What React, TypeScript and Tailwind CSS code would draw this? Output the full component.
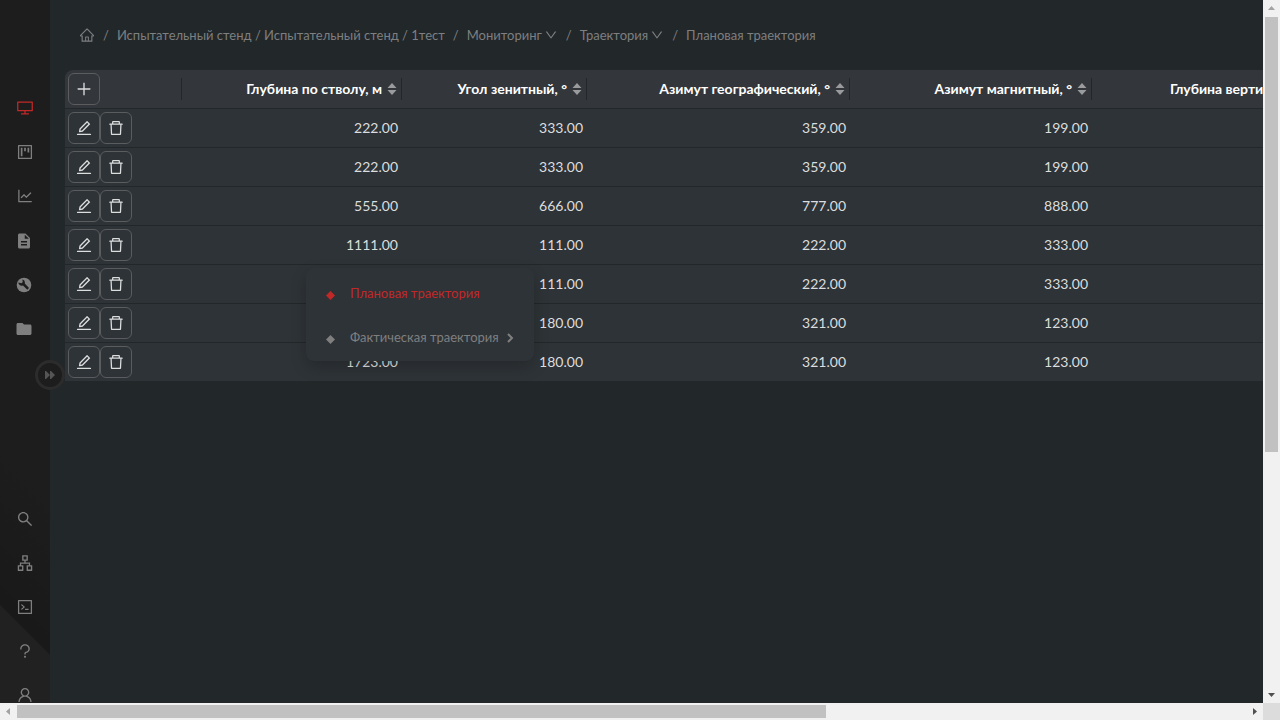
import type { ReactNode } from "react";
import {
  AiOutlineApartment, AiOutlineCode, AiOutlineDelete, AiOutlineDesktop, AiOutlineDown, AiOutlineEdit,
  AiOutlineHome, AiOutlineLineChart, AiOutlinePlus, AiOutlineProject, AiOutlineQuestion, AiOutlineSearch, AiOutlineUser,
} from "react-icons/ai";
import { MdDescription, MdFolder } from "react-icons/md";

const ServiceIcon = () => (
  <svg viewBox="0 0 16 16" fill="currentColor" className="mt-0.5 mr-0.5 size-4" aria-hidden="true">
    <circle cx="8" cy="8" r="7.300" />
    <path d="M2.300 5.600L5.500 6.200 6.800 4.900 6.300 2.500C8.300 2.700 9.300 4.600 8.800 6.600L13 11 11.300 12.800 7 8.500C4.800 9.200 2.500 8 2.300 5.600z" fill="#1d1d1d" />
  </svg>
);

const topItems: [string, ReactNode][] = [
  ["Мониторинг", <AiOutlineDesktop className="size-[18px]" />],
  ["Проекты", <AiOutlineProject className="size-[18px]" />],
  ["Графики", <AiOutlineLineChart className="size-[18px]" />],
  ["Отчёты", <MdDescription className="mt-0.5 mr-0.5 size-[18px]" />],
  ["Обслуживание", <ServiceIcon />],
  ["Файлы", <MdFolder className="mt-0.5 mr-0.5 size-[18px]" />],
];
const bottomItems: [string, ReactNode][] = [
  ["Поиск", <AiOutlineSearch className="size-[18px]" />],
  ["Структура", <AiOutlineApartment className="size-[18px]" />],
  ["Консоль", <AiOutlineCode className="size-[18px]" />],
  ["Справка", <AiOutlineQuestion className="size-[18px]" />],
  ["Профиль", <AiOutlineUser className="size-[18px]" />],
];

const columns = ["Глубина по стволу, м", "Угол зенитный, °", "Азимут географический, °", "Азимут магнитный, °", "Глубина вертикальная, м"];
const rows = [
  ["222.00", "333.00", "359.00", "199.00"],
  ["222.00", "333.00", "359.00", "199.00"],
  ["555.00", "666.00", "777.00", "888.00"],
  ["1111.00", "111.00", "222.00", "333.00"],
  ["1111.00", "111.00", "222.00", "333.00"],
  ["1723.00", "180.00", "321.00", "123.00"],
  ["1723.00", "180.00", "321.00", "123.00"],
];

function NavLinks({ items, active }: { items: [string, ReactNode][]; active?: number }) {
  return (
    <ul>
      {items.map(([label, icon], i) => (
        <li key={label}>
          <a href="#" aria-label={label} className={`flex h-11 items-center justify-center ${i === active ? "text-[#c32828]" : "text-[#7f7f7f]"}`}>
            {icon}
          </a>
        </li>
      ))}
    </ul>
  );
}

function Sidebar() {
  return (
    <nav className="relative z-10 w-[50px] shrink-0 bg-[#1d1d1d]">
      <div className="flex h-full flex-col justify-between overflow-hidden bg-[linear-gradient(45deg,#212121_0,#212121_69px,#191919_70px,#1d1d1d_180px)] pt-[86px]">
        <NavLinks items={topItems} active={0} />
        <div className="-mb-[14px]">
          <NavLinks items={bottomItems} />
        </div>
      </div>
      <button aria-label="Развернуть меню" className="absolute top-[360px] -right-[15px] flex size-[30px] items-center justify-center rounded-full border-[3px] border-[#2c2c2c] bg-[#1d1d1d] text-[#555555]">
        <svg width="10" height="8" viewBox="0 0 10 8" fill="currentColor"><path d="M0 0h1l4 4-4 4H0zM5 0h1l4 4-4 4H5z" /></svg>
      </button>
    </nav>
  );
}

function Breadcrumbs() {
  return (
    <nav className="flex items-center gap-2 px-[14px] text-[13px] leading-5 whitespace-nowrap text-[#7d7f80]">
      <a href="#" aria-label="Главная"><AiOutlineHome className="size-4" /></a>
      <span>/</span>
      <a href="#">Испытательный стенд / Испытательный стенд / 1тест</a>
      <span>/</span>
      <a href="#" className="flex items-center gap-0.5">Мониторинг <AiOutlineDown className="size-[14px]" /></a>
      <span>/</span>
      <a href="#" className="flex items-center gap-0.5">Траектория <AiOutlineDown className="size-[14px]" /></a>
      <span>/</span>
      <span>Плановая траектория</span>
    </nav>
  );
}

function IconButton({ label, children }: { label: string; children: ReactNode }) {
  return (
    <button aria-label={label} className="flex size-8 items-center justify-center rounded-md border border-[#5a5c5e] text-lg text-[#dcdddd]">
      {children}
    </button>
  );
}

function TrajectoryTable() {
  return (
    <table className="w-[1815px] table-fixed border-separate border-spacing-0 text-sm text-[#dcdddd]">
      <colgroup>
        <col className="w-[117px]" />
        <col className="w-[220px]" />
        <col className="w-[185px]" />
        <col className="w-[263px]" />
        <col className="w-[242px]" />
        <col />
      </colgroup>
      <thead>
        <tr className="h-[39px] bg-[#33363b] text-white">
          <th className="rounded-tl-lg border-b border-[#22272a] p-0 pl-[3px]">
            <div className="flex items-center justify-between">
              <IconButton label="Добавить"><AiOutlinePlus /></IconButton>
              <span className="h-[22px] w-px bg-[#22272a]" />
            </div>
          </th>
          {columns.map((c, i) => (
            <th key={c} className="border-b border-[#22272a] p-0 font-bold">
              <div className={`flex items-center whitespace-nowrap ${i === 4 ? "pl-[78px]" : "justify-end"}`}>
                {c}
                <svg className="mr-1 ml-[5px]" width="10" height="14" viewBox="0 0 10 14" fill="#999b9d"><path d="M5 1l4.500 5H.5zM5 13l4.500-5H.5z" /></svg>
                <span className="h-[22px] w-px bg-[#22272a]" />
              </div>
            </th>
          ))}
        </tr>
      </thead>
      <tbody>
        {rows.map((r, i) => (
          <tr key={i} className="h-[39px] bg-[#2e3337]">
            <td className="border-b border-[#22272a] p-0 pl-[3px]">
              <div className="flex">
                <IconButton label="Редактировать"><AiOutlineEdit /></IconButton>
                <IconButton label="Удалить"><AiOutlineDelete /></IconButton>
              </div>
            </td>
            {r.map((v, j) => (
              <td key={j} className="border-b border-[#22272a] py-0 pr-1 pl-0 text-right">{v}</td>
            ))}
            <td className="border-b border-[#22272a] p-0" />
          </tr>
        ))}
      </tbody>
    </table>
  );
}

const Diamond = () => (
  <svg width="9" height="9" viewBox="0 0 9 9" fill="currentColor" className="mt-0.5 shrink-0"><path d="M4.500 0L9 4.500 4.500 9 0 4.500z" /></svg>
);

function TrajectoryMenu() {
  return (
    <ul className="absolute top-[268px] left-[306px] z-20 w-[228px] rounded-lg bg-[#2e3337] pt-1 pb-px text-[13px] text-[#7f7f7f] shadow-[0_6px_16px_rgba(0,0,0,0.2)]">
      <li>
        <a href="#" className="flex h-11 items-center gap-[15px] px-5 text-[#c32828]">
          <Diamond />
          <span>Плановая траектория</span>
        </a>
      </li>
      <li>
        <a href="#" className="flex h-11 items-center gap-[15px] px-5">
          <Diamond />
          <span className="grow whitespace-nowrap">Фактическая траектория</span>
          <svg width="7" height="10" viewBox="0 0 7 10" fill="none" stroke="currentColor" strokeWidth="2" className="-ml-3 shrink-0"><path d="M1 1l4 4-4 4" /></svg>
        </a>
      </li>
    </ul>
  );
}

const Arrow = ({ d, fill }: { d: string; fill: string }) => (
  <svg width="17" height="17" viewBox="0 0 17 17" fill={fill} className="shrink-0"><path d={d} /></svg>
);

export default function App() {
  return (
    <div className="grid h-screen grid-cols-[minmax(0,1fr)_17px] grid-rows-[minmax(0,1fr)_17px] bg-[#f1f1f1] font-['Lato','Noto_Sans',sans-serif]">
      <div className="relative flex overflow-hidden bg-[#22272a]">
        <Sidebar />
        <main className="flex min-w-0 grow flex-col gap-[25px] overflow-hidden pt-[25px] pl-[15px]">
          <Breadcrumbs />
          <TrajectoryTable />
        </main>
        <TrajectoryMenu />
      </div>
      <div className="flex flex-col items-center">
        <Arrow d="M5 10h7L8.500 6z" fill="#a3a3a3" />
        <div className="min-h-0 grow self-stretch px-0.5"><div className="h-[65%] bg-[#c1c1c1]" /></div>
        <Arrow d="M5 7h7l-3.500 4z" fill="#505050" />
      </div>
      <div className="flex items-center">
        <Arrow d="M10 5v7L6 8.500z" fill="#a3a3a3" />
        <div className="min-w-0 grow self-stretch py-0.5"><div className="h-full w-[65.8%] bg-[#c1c1c1]" /></div>
        <Arrow d="M7 5v7l4-3.500z" fill="#505050" />
      </div>
      <div className="bg-[#dcdcdc]" />
    </div>
  );
}
